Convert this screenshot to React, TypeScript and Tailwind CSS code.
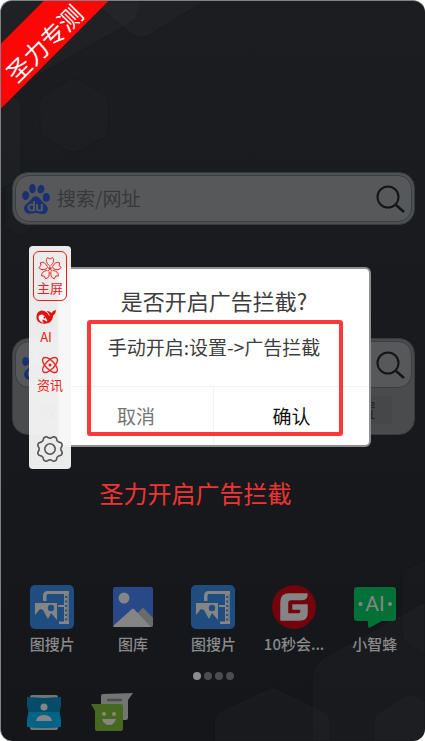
import { Atom } from 'lucide-react';
import { SiBaidu } from 'react-icons/si';

const PETALS = [0, 72, 144, 216, 288];

const gearPath = () => {
  const points: string[] = [];
  for (let i = 0; i < 96; i++) {
    const a = (i / 96) * Math.PI * 2;
    const wave = Math.max(-0.75, Math.min(0.75, Math.cos(a * 8 + Math.PI)));
    const r = 11.9 + wave * 1.3;
    points.push(`${(14 + r * Math.cos(a)).toFixed(2)} ${(14 + r * Math.sin(a)).toFixed(2)}`);
  }
  return `M${points.join('L')}Z`;
};

function Wallpaper() {
  return (
    <svg
      aria-hidden="true"
      className="absolute inset-0 h-full w-full"
      viewBox="0 0 425 741"
      preserveAspectRatio="none"
      fill="#ffffff"
      fillOpacity="0.02"
      stroke="#000000"
      strokeOpacity="0.1"
    >
      <path d="M0 0H139Q140 18 124 25L30 78L0 88Z" />
      <path d="M92 0H204L148 34Q140 39 132 34Z" />
      <path d="M67 80Q73 76 79 80L103 93Q108 96 108 102V128Q108 134 103 137L79 150Q73 153 67 150L44 137Q39 134 39 128V102Q39 96 44 93Z" fillOpacity="0.012" />
      <path d="M0 92Q20 95 20 106V178L0 189Z" />
      <path d="M4 186L20 178L38 188V222L20 236L4 228Z" fillOpacity="0.012" />
      <path d="M214 741V722Q214 715 221 711L265 690Q272 686 279 690L323 711Q330 715 330 722V741Z" />
      <path d="M312 741V680Q312 665 325 657L425 602V741Z" />
      <path d="M374 741V720Q374 715 379 712L405 696Q410 693 415 696L425 701V741Z" />
      <path d="M402 570V634Q402 641 408 644L425 655V560Z" fillOpacity="0.012" />
    </svg>
  );
}

function SearchIcon() {
  return (
    <svg className="size-8" viewBox="0 0 32 32" fill="none" stroke="#131415" strokeWidth="2">
      <circle cx="14" cy="14" r="10.5" />
      <path d="M22 22L30 29" strokeWidth="2.4" />
    </svg>
  );
}

function SearchBar({ label, placeholder }: { label: string; placeholder?: string }) {
  return (
    <form
      className="flex h-[47px] items-center gap-1.5 rounded-[14px] border border-[#393e42] bg-[#575859] px-[5px]"
      onSubmit={(e) => e.preventDefault()}
    >
      <SiBaidu className="size-[30px] shrink-0 text-[#1b3070]" />
      <input
        type="text"
        aria-label={label}
        placeholder={placeholder}
        className="min-w-0 flex-1 bg-transparent text-[19px] text-[#222] outline-none placeholder:text-[#37383a]"
      />
      <button type="submit" aria-label="搜索" className="shrink-0">
        <SearchIcon />
      </button>
    </form>
  );
}

function FilmIcon() {
  return (
    <svg className="size-11" viewBox="0 0 44 44">
      <rect width="44" height="44" rx="5" fill="#1f4d80" />
      <path d="M13 16V11Q13 6 18 6H39V9H37V36H39V39H29V36.500H34V22H28V20H34V9H18Q16.500 9 16.500 11V16Z" fill="#858585" />
      <path d="M36 11V36" stroke="#1f4d80" strokeWidth="1.8" strokeDasharray="2 2.500" />
      <path d="M38 9V36" stroke="#858585" strokeWidth="1.5" />
      <path d="M5 18H27V35L21 28L18 34L13 25L10 24L5 30Z" fill="#858585" />
      <circle cx="21" cy="23" r="3.200" fill="#1f4d80" />
    </svg>
  );
}

function GalleryIcon() {
  return (
    <svg className="size-11" viewBox="0 0 44 44">
      <rect x="2" y="2" width="40" height="40" rx="2" fill="#284887" />
      <circle cx="13" cy="13" r="5.500" fill="#858585" />
      <path d="M21 34L32 22.500L42 33V40Q42 42 40 42H24Z" fill="#6a6a6a" />
      <path d="M2 41L21 24Q22 23 23 24L40 42H4Q2 42 2 41Z" fill="#858585" />
    </svg>
  );
}

function MeetingIcon() {
  return (
    <svg className="size-11" viewBox="0 0 44 44">
      <circle cx="22" cy="22" r="22" fill="#73030d" />
      <path
        d="M35 9H17Q9 9 9 17V35H28Q35 35 35 28V20H21V24H29V26.500Q29 29 26.500 29H15.500V18Q15.500 14.500 19 14.500H30Q35 14.500 35 9Z"
        fill="#858585"
        stroke="#858585"
        strokeWidth="1.500"
        strokeLinejoin="round"
      />
    </svg>
  );
}

function BeeIcon() {
  return (
    <svg className="size-11" viewBox="0 0 44 44">
      <path d="M4 2H40Q43 2 43 5V33Q43 36 40 36H29L17 42.500Q15 43.500 15 41V36H4Q1 36 1 33V5Q1 2 4 2Z" fill="#037038" />
      <circle cx="7.500" cy="19" r="2" fill="#858585" />
      <circle cx="37" cy="19" r="2" fill="#858585" />
      <text x="22" y="26" textAnchor="middle" fontSize="21" fontFamily="Roboto, sans-serif" fontWeight="400" fill="#858585">
        AI
      </text>
    </svg>
  );
}

function ContactsIcon() {
  return (
    <svg className="size-11" viewBox="0 0 44 44">
      <path d="M8 5Q8 3 10 3H34Q36 3 36 5V37H8Z" fill="#707577" />
      <path d="M8 30H36V36Q36 38 34 38H10Q8 38 8 36Z" fill="#707577" />
      <path d="M5 5L22 6L39 5V14L37.500 21L39 28V35L22 36L5 35V28L6.500 21L5 14Z" fill="#044c6a" />
      <path d="M6.500 20H37.500L39 28V35L22 36L5 35V28Z" fill="#046487" />
      <circle cx="22" cy="15" r="3.500" fill="#858585" />
      <path d="M14 29Q15 23 22 23Q29 23 30 29Z" fill="#858585" />
    </svg>
  );
}

function MessageIcon() {
  return (
    <svg className="size-11" viewBox="0 0 44 44">
      <path d="M13 2Q11 2 11 4V24Q11 28 15 28H36Q38 28 38 26V8L43 1Z" fill="#747474" />
      <path d="M17 8H32" stroke="#4d4d4d" strokeWidth="2.500" />
      <path d="M1 12H31Q33 12 33 14V37Q33 39 31 39H7Q5 39 5 37V19Z" fill="#47691f" />
      <circle cx="14" cy="22" r="2" fill="#858585" />
      <circle cx="24" cy="22" r="2" fill="#858585" />
      <path d="M12 27H26Q24 33 19 33Q14 33 12 27Z" fill="#858585" />
    </svg>
  );
}

function FlowerIcon() {
  return (
    <svg className="size-6" viewBox="0 0 24 24" fill="none" stroke="#e2241c" strokeWidth="0.9">
      {PETALS.map((deg) => (
        <g key={deg} transform={`rotate(${deg} 12 12.500)`}>
          <path d="M11 9.500Q6.500 5 9.500 1.600L12 3L14.500 1.600Q17.500 5 13 9.500" />
          <path d="M12 12V9" strokeWidth="0.700" />
        </g>
      ))}
      <circle cx="12" cy="12.500" r="0.800" fill="#e2241c" />
    </svg>
  );
}

function WhaleIcon() {
  return (
    <svg className="h-4 w-5" viewBox="0 0 20 16">
      <path
        d="M0.500 7Q1 2 6 1.500Q11 2 12.500 6L14 7Q13 4 10.500 2Q14 2 15.500 4Q17 1.500 20 1Q19.500 5.500 17 6.500Q17 12 12.500 14Q6 16 2 12.500Q0 10 0.500 7Z"
        fill="#e2100c"
      />
      <path d="M2.500 8Q3 5 6 5.500Q9 6.500 11 11Q12 12.500 10.500 12.500Q8 10.500 6.500 10.500Q6 12.500 8 14Q2.500 13 2.500 8Z" fill="#f8f8f8" />
      <circle cx="8.500" cy="8.500" r="1" fill="#e2100c" />
    </svg>
  );
}

const apps = [
  { id: 'film-1', name: '图搜片', Icon: FilmIcon },
  { id: 'gallery', name: '图库', Icon: GalleryIcon },
  { id: 'film-2', name: '图搜片', Icon: FilmIcon },
  { id: 'meeting', name: '10秒会...', Icon: MeetingIcon },
  { id: 'bee', name: '小智蜂', Icon: BeeIcon },
];

function SidePanel() {
  return (
    <nav className="absolute left-7 top-[245px] flex h-[223px] w-[42px] flex-col items-center rounded-[4px] bg-[#f7f7f7]/95 pb-1.5 pt-[5px] text-[13px] leading-4 text-[#e8221a]">
      <button className="flex h-[50px] w-[34px] flex-col items-center justify-center rounded-md border border-[#e8221a]">
        <FlowerIcon />
        <span>主屏</span>
      </button>
      <button className="mr-2 mt-2 flex flex-col items-center">
        <WhaleIcon />
        <span className="mt-1">AI</span>
      </button>
      <button className="mt-2.5 flex flex-col items-center">
        <Atom className="size-5" strokeWidth={1.6} />
        <span className="mt-0.5">资讯</span>
      </button>
      <button aria-label="设置" className="mt-auto">
        <svg className="size-7" viewBox="0 0 28 28" fill="none" stroke="#555" strokeWidth="1.600">
          <path d={gearPath()} strokeLinejoin="round" />
          <circle cx="14" cy="14" r="5.200" />
        </svg>
      </button>
    </nav>
  );
}

function AdBlockDialog() {
  return (
    <section
      role="dialog"
      aria-labelledby="dialog-title"
      className="absolute left-14 right-[54px] top-[266px] flex h-[180px] flex-col rounded-md border-2 border-[#8d8f90] bg-white text-center text-[#3d3d3d]"
    >
      <h1 id="dialog-title" className="pt-[15px] text-[22px] leading-8">
        是否开启广告拦截?
      </h1>
      <p className="mt-[17px] text-[19px] leading-7">手动开启:设置-&gt;广告拦截</p>
      <div className="mt-auto grid h-[59px] grid-cols-2 border-t border-[#f2f2f2] text-[19px]">
        <button className="border-r border-[#f2f2f2] text-[#757575]">取消</button>
        <button className="text-[#111]">确认</button>
      </div>
    </section>
  );
}

export default function App() {
  return (
    <div className="min-h-screen bg-white font-['Noto_Sans_CJK_SC',sans-serif]">
      <main className="relative flex min-h-screen flex-col overflow-hidden rounded-xl border-l border-t border-[#7d8284] bg-linear-to-b from-[#1b1d20] to-[#14161a] pb-1 pl-[11px] pr-2.5">
        <Wallpaper />

        <div className="relative mt-[171px] rounded-2xl border border-[#363b3f] bg-[#4d5154] p-0.5">
          <SearchBar label="搜索或输入网址" placeholder="搜索/网址" />
        </div>

        <div className="relative mt-[113px] rounded-2xl border border-[#363b3f] bg-[#4a4b4c] p-0.5">
          <SearchBar label="第二搜索栏" />
          <div className="flex h-11 items-center justify-between px-5 text-[19px] text-[#242526]">
            <button className="px-1">收藏</button>
            <button className="rounded bg-[#464748] px-4">设置</button>
          </div>
        </div>

        <p className="relative mt-10 pr-9 text-center text-2xl leading-9 text-[#f03434]">圣力开启广告拦截</p>

        <ul className="relative mt-[74px] grid grid-cols-5">
          {apps.map(({ id, name, Icon }) => (
            <li key={id}>
              <button className="flex w-full flex-col items-center gap-[3px] text-[15px] font-medium leading-6 text-[#8a8a8a]">
                <Icon />
                <span className="whitespace-nowrap">{name}</span>
              </button>
            </li>
          ))}
        </ul>

        <div className="relative mt-4 flex justify-center gap-[3px]">
          <span className="size-2 rounded-full bg-[#8d8d8d]" />
          <span className="size-2 rounded-full bg-[#4b4c50]" />
          <span className="size-2 rounded-full bg-[#4b4c50]" />
          <span className="size-2 rounded-full bg-[#4b4c50]" />
        </div>

        <div className="relative mt-3 flex gap-6 px-2.5">
          <button aria-label="联系人">
            <ContactsIcon />
          </button>
          <button aria-label="信息">
            <MessageIcon />
          </button>
        </div>

        <AdBlockDialog />
        <div
          aria-hidden="true"
          className="pointer-events-none absolute left-[86px] right-[82px] top-[319px] h-[116px] rounded-[3px] border-4 border-[#fd3838]"
        />
        <SidePanel />
        <div className="absolute -left-[42px] top-[14px] flex h-[46px] w-40 -rotate-45 items-end justify-center bg-[#ff0505] pb-1 text-2xl leading-none text-white">
          圣力专测
        </div>
      </main>
    </div>
  );
}
